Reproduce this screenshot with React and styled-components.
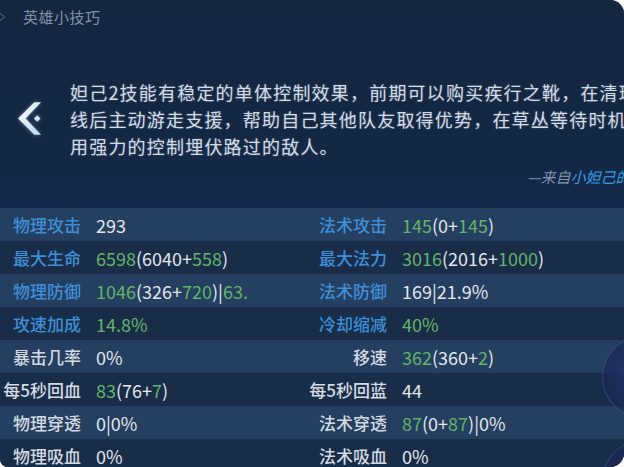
import React from 'react';
import styled, { createGlobalStyle } from 'styled-components';

const GlobalStyle = createGlobalStyle`
  html, body { margin: 0; padding: 0; background: #ffffff; }
  body { font-family: "Noto Sans CJK SC", "Noto Sans", sans-serif; }
`;

const G = 'g';
const W = 'w';

const stats = [
  [
    { label: '物理攻击', blue: true, value: [['293', W]] },
    { label: '法术攻击', blue: true, value: [['145', G], ['(0+', W], ['145', G], [')', W]] },
  ],
  [
    { label: '最大生命', blue: true, value: [['6598', G], ['(6040+', W], ['558', G], [')', W]] },
    { label: '最大法力', blue: true, value: [['3016', G], ['(2016+', W], ['1000', G], [')', W]] },
  ],
  [
    { label: '物理防御', blue: true, value: [['1046', G], ['(326+', W], ['720', G], [')|', W], ['63.', G]] },
    { label: '法术防御', blue: true, value: [['169|21.9%', W]] },
  ],
  [
    { label: '攻速加成', blue: true, value: [['14.8%', G]] },
    { label: '冷却缩减', blue: true, value: [['40%', G]] },
  ],
  [
    { label: '暴击几率', value: [['0%', W]] },
    { label: '移速', value: [['362', G], ['(360+', W], ['2', G], [')', W]] },
  ],
  [
    { label: '每5秒回血', value: [['83', G], ['(76+', W], ['7', G], [')', W]] },
    { label: '每5秒回蓝', value: [['44', W]] },
  ],
  [
    { label: '物理穿透', value: [['0|0%', W]] },
    { label: '法术穿透', value: [['87', G], ['(0+', W], ['87', G], [')|0%', W]] },
  ],
  [
    { label: '物理吸血', value: [['0%', W]] },
    { label: '法术吸血', value: [['0%', W]] },
  ],
];

const tipLines = [
  '妲己2技能有稳定的单体控制效果，前期可以购买疾行之靴，在清理',
  '线后主动游走支援，帮助自己其他队友取得优势，在草丛等待时机',
  '用强力的控制埋伏路过的敌人。',
];

export default function App() {
  return (
    <>
      <GlobalStyle />
      <Page>
        <TipPanel>
          <Header>
            <HeaderIcon viewBox="0 0 14 18">
              <path d="M2 1 L12 9 L2 17" fill="none" stroke="#3b5575" strokeWidth="2" />
            </HeaderIcon>
            英雄小技巧
          </Header>
          <TipBody>
            <Arrow viewBox="0 0 26 34">
              <defs>
                <linearGradient id="arr" x1="0" y1="0" x2="1" y2="1">
                  <stop offset="0" stopColor="#ffffff" />
                  <stop offset="1" stopColor="#b9d8f0" />
                </linearGradient>
              </defs>
              <polygon points="17,0 24,0 8,17 24,34 17,34 0,17" fill="url(#arr)" />
              <polygon points="20,13.5 23.5,17 20,20.5 16.5,17" fill="#cfe6f8" />
            </Arrow>
            <TipText>
              {tipLines.map((l) => (
                <TipLine key={l}>{l}</TipLine>
              ))}
            </TipText>
          </TipBody>
          <Attribution>
            —来自<Author>小妲己的</Author>
          </Attribution>
        </TipPanel>
        <StatsTable>
          {stats.map((row, i) => (
            <StatRow key={i} $light={i % 2 === 0}>
              {row.map((s) => (
                <StatCell key={s.label}>
                  <Label $blue={s.blue}>{s.label}</Label>
                  <Value>
                    {s.value.map(([t, c], k) => (
                      <Seg key={k} $green={c === G}>{t}</Seg>
                    ))}
                  </Value>
                </StatCell>
              ))}
            </StatRow>
          ))}
        </StatsTable>
        <Orb $top={336} />
        <Orb $top={440} />
      </Page>
    </>
  );
}

const Page = styled.div`
  position: relative;
  width: 624px;
  height: 467px;
  overflow: hidden;
  background: #132440;
  border-radius: 0 14px 14px 8px;
`;

const TipPanel = styled.div`
  height: 208px;
  background: linear-gradient(180deg, #15263f 0%, #142742 60%, #15294a 100%);
  overflow: hidden;
`;

const Header = styled.div`
  display: flex;
  align-items: center;
  gap: 17px;
  height: 20px;
  padding-top: 7px;
  margin-left: -4px;
  font-size: 15px;
  line-height: 20px;
  color: #8193a9;
  letter-spacing: 0.5px;
`;

const HeaderIcon = styled.svg`
  width: 10px;
  height: 16px;
`;

const TipBody = styled.div`
  display: flex;
  align-items: flex-start;
  margin-top: 52px;
`;

const Arrow = styled.svg`
  flex: none;
  width: 25px;
  height: 33px;
  margin: 23px 0 0 18px;
  filter: drop-shadow(0 0 2px rgba(150, 200, 240, 0.5));
`;

const TipText = styled.div`
  margin-left: 27px;
  white-space: nowrap;
`;

const TipLine = styled.div`
  font-size: 18px;
  line-height: 27px;
  letter-spacing: 1.2px;
  color: #d3dbe5;
  text-shadow: 0 0 2px rgba(180, 210, 240, 0.35);
`;

const Attribution = styled.div`
  margin: 7px 0 0 527px;
  white-space: nowrap;
  font-size: 15px;
  line-height: 20px;
  font-style: italic;
  color: #7f94ad;
`;

const Author = styled.span`
  color: #3a9ce6;
`;

const StatsTable = styled.div`
  display: flex;
  flex-direction: column;
`;

const StatRow = styled.div`
  display: grid;
  grid-template-columns: 306px 1fr;
  height: 33px;
  align-items: center;
  background: ${(p) => (p.$light ? '#243f5f' : '#192d48')};
`;

const StatCell = styled.div`
  display: flex;
  align-items: center;
  gap: 15px;
  white-space: nowrap;
`;

const Label = styled.span`
  width: 81px;
  flex: none;
  text-align: right;
  font-size: 17px;
  font-weight: 500;
  color: ${(p) => (p.$blue ? '#3f8fd8' : '#d3dae2')};
`;

const Value = styled.span`
  font-size: 18px;
  color: #e1e6ec;
`;

const Seg = styled.span`
  color: ${(p) => (p.$green ? '#62b46a' : '#e1e6ec')};
`;

const Orb = styled.div`
  position: absolute;
  left: 602px;
  top: ${(p) => p.$top}px;
  width: 80px;
  height: 80px;
  border-radius: 50%;
  border: 1px solid rgba(90, 120, 190, 0.5);
  background: radial-gradient(circle at 45% 50%, #2f3478 0%, #1d2858 55%, #17294c 80%);
  opacity: 0.7;
`;
